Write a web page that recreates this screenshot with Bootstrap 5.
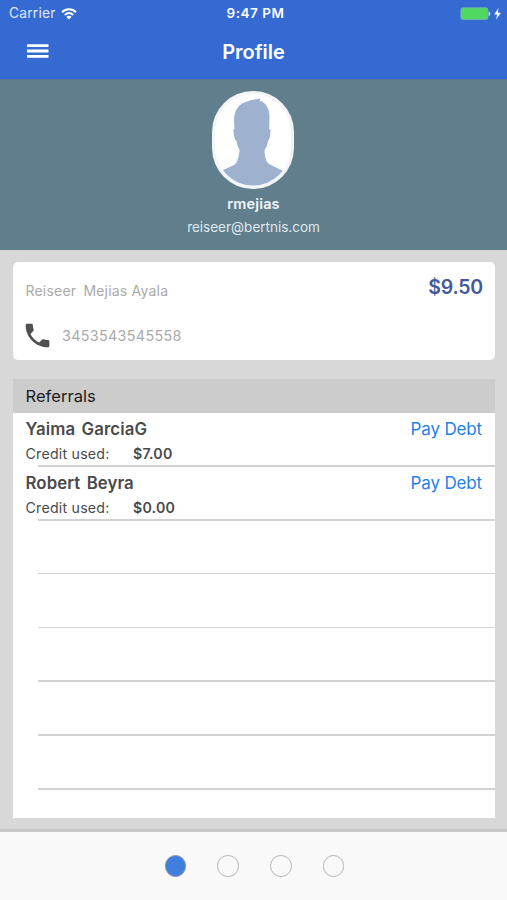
<!DOCTYPE html>
<html lang="en">
<head>
<meta charset="utf-8">
<meta name="viewport" content="width=device-width, initial-scale=1">
<title>Profile</title>
<link href="https://cdn.jsdelivr.net/npm/bootstrap@5.3.0/dist/css/bootstrap.min.css" rel="stylesheet">
<style>
body{font-family:Inter,"Liberation Sans",sans-serif;background:#d8d8d8;height:900px;overflow:hidden;color:#4a4a4a}
.topbar{height:79px;background:#366ad3;color:#fff}
.status{height:27px;font-size:13px;line-height:27px;padding:0 5px 0 9px}
.side{flex:1 1 0}
.carrier{font-size:13.8px;letter-spacing:.2px;color:#dfe8fb}
.clock{font-weight:600;font-size:13.5px;letter-spacing:.5px}
.titlebar{height:52px;padding:0 27px}
.title{font-size:20px;font-weight:600;line-height:51px;letter-spacing:0}
.hero{height:171px;background:#617e8c;border-top:1px solid #5672a0;padding-top:11px;color:#f0f5f8}
.portrait{margin-right:1px}
.username{font-size:14.5px;font-weight:600;line-height:20px;margin-top:5px;letter-spacing:.15px}
.mail{font-size:13.5px;line-height:20px;margin-top:2.5px;color:#dfe8ee;letter-spacing:0}
.info{height:98px;margin:12px 12px 0 13px;border-radius:5px;background:#fff;padding:0 12px}
.fullname{font-size:14px;line-height:20px;margin-top:19px;color:#aaa;letter-spacing:.2px;padding-left:.5px}
.fullname span{margin-right:3px}
.amount{font-size:19.5px;font-weight:600;line-height:24px;margin-top:13px;color:#425a9c;letter-spacing:-.2px}
.phone{height:24px;margin-top:22px;color:#aaa;font-size:14.3px;gap:12px;letter-spacing:.35px}
.phone span{line-height:22px;padding-top:1px}
.referrals{margin:19px 12px 0 13px;height:439px;background:#fff;overflow:hidden}
.heading{height:33.5px;line-height:34px;padding-left:12.5px;background:#ccc;color:#1c1c1c;font-size:16.5px;letter-spacing:.05px}
.entry{height:53.8px;position:relative;padding:4.4px 13px 0 12.5px}
.entry::after{content:"";position:absolute;left:25px;right:0;bottom:-.5px;height:1.5px;background:#d2d2d2}
.person{font-size:16.8px;font-weight:600;line-height:24px;letter-spacing:.1px;word-spacing:2px}
.pay{font-size:17px;line-height:24px;color:#2481ea;text-decoration:none;letter-spacing:-.15px}
.credit{font-size:14.2px;line-height:20px;margin-top:3.3px;letter-spacing:.2px}
.credit span{width:107.5px;letter-spacing:.22px}
.pager{margin-top:11px;height:71px;border-top:3px solid #c6c6c6;background:#f9f9f9;gap:31px;padding-left:2px}
.pip{width:21.6px;height:21.6px;border-radius:50%;border:1.6px solid #b4b4b4}
.pip.current{background:#417fdf;border-color:#8794a8}
</style>
</head>
<body>
<header class="topbar">
  <div class="status d-flex align-items-center">
    <div class="side d-flex align-items-center"><span class="carrier">Carrier</span>
      <svg class="ms-1" width="18" height="14" viewBox="0 0 18 14" fill="none" stroke="#fff" stroke-width="2"><path d="M2 5.2C6 1.2 12 1.2 16 5.2M4.8 8C7.4 5.6 10.6 5.6 13.2 8"/><path d="M6.4 9.7C8 8.4 10 8.4 11.6 9.7L9 12.4Z" fill="#fff" stroke="none"/></svg>
    </div>
    <span class="clock">9:47 PM</span>
    <div class="side d-flex align-items-center justify-content-end">
      <svg width="43" height="16" viewBox="0 0 43 16"><rect x="1.9" y="1.8" width="27" height="11.8" rx="2" fill="#4fd963" stroke="#7eb2b8" stroke-width=".8"/><path d="M29.6 5.500v4.500c2.200-.5 2.200-4 0-4.500Z" fill="#c9dcf8"/><path d="M39.500 2L35.200 8.600H38.200L37 13.500L42 6.800H38.800Z" fill="#fff"/></svg>
    </div>
  </div>
  <div class="titlebar d-flex">
    <div class="side"><svg width="22" height="48" viewBox="0 0 22 48" stroke="#fff" stroke-width="2.8"><path d="M0 18.6H21.5M0 24H21.5M0 29.3H21.5"/></svg></div>
    <h1 class="title mb-0">Profile</h1>
    <div class="side"></div>
  </div>
</header>
<section class="hero d-flex flex-column align-items-center">
  <svg class="portrait flex-shrink-0" width="82" height="98" viewBox="0 0 82 98">
    <defs><clipPath id="face"><rect x="3.5" y="3.5" width="75" height="91" rx="37.5"/></clipPath></defs>
    <rect width="82" height="98" rx="41" fill="#f3f4f6"/><rect x="3" y="3" width="76" height="92" rx="38" fill="#fff"/>
    <path clip-path="url(#face)" fill="#9eb2d0" d="M11 79L21 74.500C25 72.500 26.500 68 27.500 60L27 57.500C25.500 56 25 53 24.500 50C22.500 49 21.500 43 21.500 38.500L22.500 38C21.500 28 22 20 27 15C33 9.500 41 8.500 48.500 7.500L47.500 10.500L49.500 10C55.500 14 58 20 57.500 28L57.200 38L58.500 38.500C58.500 43 58 48 56 50C55.500 54 54.500 56.500 53 58L52.500 61C53.500 68 54 72 59 74L71 80L62 98H16Z"/>
  </svg>
  <div class="username">rmejias</div>
  <div class="mail">reiseer@bertnis.com</div>
</section>
<main>
  <section class="info">
    <div class="d-flex justify-content-between"><div class="fullname"><span>Reiseer</span> Mejias Ayala</div><div class="amount">$9.50</div></div>
    <div class="phone d-flex align-items-center">
      <svg width="25" height="25" viewBox="2.500 2.500 19 19" fill="#505050"><path d="M6.620 10.790c1.440 2.830 3.760 5.140 6.590 6.590l2.200-2.200c.27-.27.670-.36 1.020-.24 1.120.37 2.330.57 3.570.57.550 0 1 .45 1 1V20c0 .55-.45 1-1 1-9.390 0-17-7.610-17-17 0-.55.450-1 1-1h3.500c.55 0 1 .45 1 1 0 1.250.2 2.450.57 3.570.11.350.03.740-.25 1.020l-2.200 2.200z"/></svg>
      <span>3453543545558</span>
    </div>
  </section>
  <section class="referrals">
    <div class="heading">Referrals</div>
    <div class="entry"><div class="d-flex justify-content-between"><span class="person">Yaima GarciaG</span><a class="pay" href="#">Pay Debt</a></div><div class="credit d-flex"><span>Credit used:</span><b class="fw-semibold">$7.00</b></div></div>
    <div class="entry"><div class="d-flex justify-content-between"><span class="person">Robert Beyra</span><a class="pay" href="#">Pay Debt</a></div><div class="credit d-flex"><span>Credit used:</span><b class="fw-semibold">$0.00</b></div></div>
    <div class="entry"></div><div class="entry"></div><div class="entry"></div><div class="entry"></div><div class="entry"></div>
  </section>
</main>
<footer class="pager d-flex justify-content-center align-items-center">
  <span class="pip current"></span><span class="pip"></span><span class="pip"></span><span class="pip"></span>
</footer>
<script src="https://cdn.jsdelivr.net/npm/bootstrap@5.3.0/dist/js/bootstrap.bundle.min.js"></script>
</body>
</html>
